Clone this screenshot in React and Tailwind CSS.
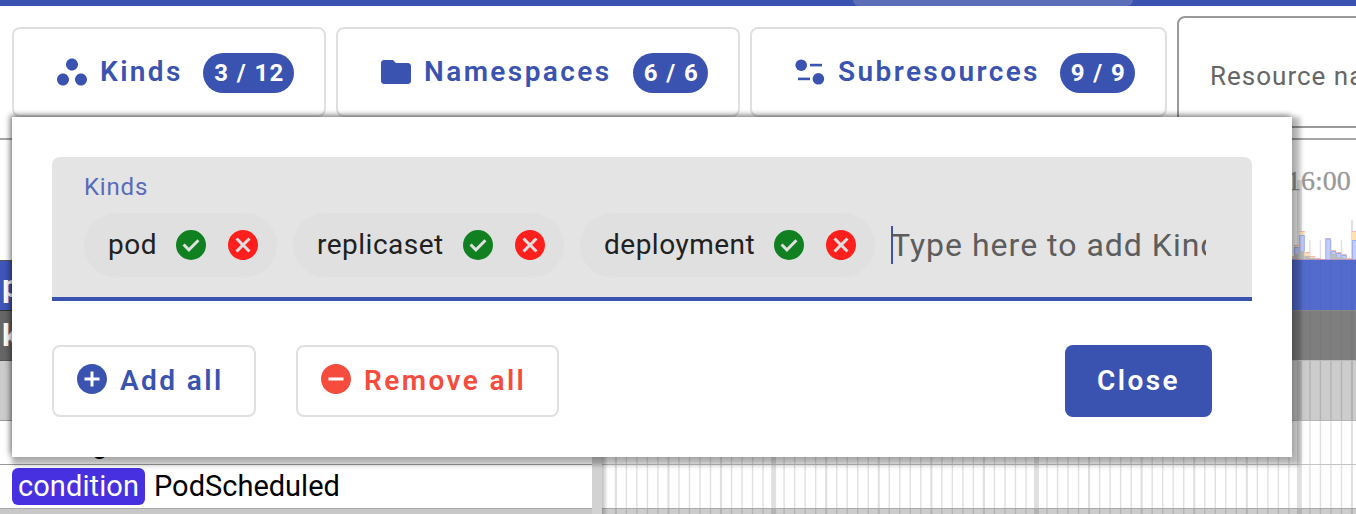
import React from 'react';
import { MdWorkspaces, MdFolder, MdCancel, MdAddCircle, MdRemoveCircle } from 'react-icons/md';

function SubresourceIcon() {
  return (
    <svg width="36" height="36" viewBox="0 0 36 36" fill="currentColor" className="shrink-0">
      <circle cx="9.2" cy="11.2" r="5.8" />
      <rect x="18" y="9.8" width="12" height="2.6" />
      <rect x="6" y="23.6" width="12" height="2.6" />
      <circle cx="26.4" cy="24.8" r="5.8" />
    </svg>
  );
}

function CheckIcon() {
  return (
    <svg width="36" height="36" viewBox="0 0 24 24" fill="currentColor" className="ml-auto shrink-0 text-[#108020]">
      <path fillRule="evenodd" d="M12 2a10 10 0 1 0 0 20a10 10 0 1 0 0-20ZM10.6 16.6 17.65 9.55 16.25 8.15 10.6 13.8 7.75 10.95 6.35 12.35Z" />
    </svg>
  );
}

function FilterButton({ icon, label, count, width, badge }) {
  return (
    <button className={`flex h-[90px] shrink-0 items-start rounded-lg border-2 border-[#e0e0e0] pl-10 text-[#3a53b0] ${width}`}>
      <span className="mt-[25px] shrink-0">{icon}</span>
      <span className="ml-2.5 mt-[25px] text-[28px] font-semibold leading-[36px] tracking-[2.4px]">{label}</span>
      <span className={`ml-auto mr-[30px] mt-6 flex h-10 items-center justify-center rounded-full bg-[#3a53b0] pl-0.5 text-[24px] font-bold tracking-[1.4px] text-white ${badge}`}>
        {count}
      </span>
    </button>
  );
}

function Chip({ label, width }) {
  return (
    <div className={`flex h-16 shrink-0 items-center rounded-full bg-[#e0e0e0] pl-6 pr-4 ${width}`}>
      <span className="text-[28px] tracking-[0.5px] text-[#212121]">{label}</span>
      <CheckIcon />
      <MdCancel size={36} className="ml-4 shrink-0 text-[#ff1f1c]" />
    </div>
  );
}

const STEP = 10.516;
const ORIGIN = 1299.4;
const ticks = [];
for (let i = -65; i <= 5; i++) {
  const major = i % 25 === 0;
  const medium = i % 5 === 0;
  ticks.push({ x: ORIGIN + i * STEP, w: major ? 5 : medium ? 2.2 : 1.4, top: major ? 42 : medium ? 82 : 102 });
}

const bars = [
  [1288.7, 256, 258, 258], [1294, 245, 247, 254], [1299.3, 231, 235, 251], [1304.6, 252, 256, 256],
  [1309.9, 256, 258, 258], [1315.2, 258, 259, 259], [1320.4, 259, 260, 260], [1325.4, 238, 238.5, 260],
  [1330.7, 250, 251, 254], [1336, 252, 253, 257], [1341.3, 254, 255, 258], [1346.6, 258, 259, 259],
  [1352, 231, 240, 260],
];

function Timeline() {
  return (
    <svg width="754" height="376" viewBox="602 138 754 376" className="block">
      <g fill="#000" fillOpacity="0.12">
        {ticks.map((t, i) => <rect key={i} x={t.x - t.w / 2} y={138 + t.top} width={t.w} height={260 - 138 - t.top} />)}
      </g>
      <text x="1287" y="190" fontSize="28" fill="#999" stroke="#999" strokeWidth="0.3" fontFamily="Liberation Serif, serif">16:00</text>
      {bars.map(([x, top, blue, gray], i) => (
        <g key={i}>
          <rect x={x} y={top} width="5.3" height={blue - top} fill="#ffdfb5" />
          <rect x={x} y={top} width="5.3" height="1" fill="#f5b5b5" />
          <rect x={x} y={blue} width="5.3" height={gray - blue} fill="#c5ccfb" />
          <path d={`M${x + 0.4} ${gray}V${blue + 0.5}H${x + 5}V${gray}`} fill="none" stroke="#8da9e8" strokeWidth="0.8" />
          <rect x={x} y={gray} width="5.3" height={260 - gray} fill="#bcbcb9" />
        </g>
      ))}
      <rect x="602" y="259.3" width="754" height="1" fill="#b58bc0" />
      <rect x="602" y="260" width="754" height="50" fill="#536bcc" />
      <rect x="602" y="310" width="754" height="50" fill="#7e7e7e" />
      <rect x="602" y="360" width="754" height="60" fill="#ccc" />
      <rect x="602" y="508" width="754" height="6" fill="#ccc" />
      <g fill="#000">
        {ticks.map((t, i) => (
          <g key={i}>
            <rect x={t.x - t.w / 2} y="260" width={t.w} height="100" fillOpacity="0.035" />
            <rect x={t.x - t.w / 2} y="360" width={t.w} height="154" fillOpacity="0.12" />
          </g>
        ))}
        <rect x="602" y="310" width="754" height="1" fill="#888" />
        <rect x="602" y="360" width="754" height="1" fill="#bbb" />
        <rect x="602" y="420" width="754" height="1" fill="#b5b5b5" />
        <rect x="602" y="464" width="754" height="1" fill="#c4c4c4" />
        <rect x="602" y="508" width="754" height="1" fill="#aaa" />
      </g>
    </svg>
  );
}

export default function App() {
  return (
    <div className="relative flex h-[514px] w-[1356px] flex-col overflow-hidden bg-white font-['Roboto',sans-serif]">
      <header className="flex h-1.5 shrink-0 bg-[#3a53b0]">
        <div className="ml-[853px] h-1.5 w-[280px] rounded-b-lg bg-[#5d6eb9]" />
      </header>

      <div className="flex h-[132px] shrink-0 items-start gap-2.5 pl-3 pt-[21px]">
        <FilterButton icon={<MdWorkspaces size={36} />} label="Kinds" count="3 / 12" width="w-[314px]" badge="w-[91px]" />
        <FilterButton icon={<MdFolder size={36} />} label="Namespaces" count="6 / 6" width="w-[404px]" badge="w-[75px]" />
        <FilterButton icon={<SubresourceIcon />} label="Subresources" count="9 / 9" width="w-[417px]" badge="w-[75px]" />
        <div className="-mt-[11px] h-[112px] w-[400px] shrink-0 rounded-lg border-2 border-[#9a9a9a] pl-[31px] pt-[42px] text-[26px] leading-[32px] tracking-[1px] text-[#666]">
          Resource name
        </div>
      </div>

      <main className="flex flex-1 border-t-2 border-[#a6a6a6]">
        <section className="flex w-[592px] shrink-0 flex-col">
          <div className="h-[120px] shrink-0" />
          <div className="h-[50px] shrink-0 border-t border-[#555] bg-[#3f55b8] pl-0.5 text-[32px] font-bold leading-[50px] text-white">p</div>
          <div className="h-[50px] shrink-0 border-t border-[#333] bg-[#666] pl-0.5 text-[32px] font-bold leading-[48px] text-white">k</div>
          <div className="h-[60px] shrink-0 border-t border-[#555] bg-[#ccc]" />
          <div className="h-11 shrink-0 border-t border-[#999] pl-[92px] text-[28px] leading-[46px] text-black">g</div>
          <div className="flex h-11 shrink-0 items-center gap-[9px] border-t border-[#999] pl-3">
            <span className="flex h-[37px] w-[133px] items-center justify-center rounded-md bg-[#4630e0] text-[29px] tracking-[0.1px] text-white">condition</span>
            <span className="text-[29px] text-black">PodScheduled</span>
          </div>
          <div className="h-1.5 shrink-0 border-t border-[#aaa] bg-[#c8c8c8]" />
        </section>
        <div className="w-2.5 shrink-0 bg-[#d2d2d2]" />
        <section className="relative -mt-0.5 h-[376px] shrink-0">
          <Timeline />
          <div className="absolute left-0 top-0 h-full w-1.5 bg-linear-to-r from-black/25 to-transparent" />
        </section>
      </main>

      <div className="absolute left-3 top-[117px] flex h-[340px] w-[1280px] flex-col bg-white p-10 shadow-[-2px_-2px_6px_rgba(0,0,0,0.4),4px_4px_5px_4px_rgba(0,0,0,0.28)]">
        <div className="h-36 shrink-0 rounded-t-lg border-b-4 border-[#3a53b0] bg-[#e4e4e4] pl-8 pr-[46px] pt-4">
          <div className="h-10 text-[24px] leading-[28px] tracking-[0.8px] text-[#596bbb]">Kinds</div>
          <div className="flex items-center gap-4">
            <Chip label="pod" width="w-[193px]" />
            <Chip label="replicaset" width="w-[271px]" />
            <Chip label="deployment" width="w-[295px]" />
            <div className="flex min-w-0 flex-1 items-center overflow-hidden">
              <span className="h-[38px] w-0.5 shrink-0 bg-[#3a53b0]" />
              <span className="-ml-0.5 whitespace-nowrap text-[32px] tracking-[1px] text-[#5d5d5d]">Type here to add Kinds</span>
            </div>
          </div>
        </div>
        <div className="mt-11 flex h-[72px] shrink-0 items-stretch pr-10 text-[28px] font-semibold tracking-[2.4px]">
          <button className="flex w-[204px] items-center rounded-lg border-2 border-[#e0e0e0] pl-5 text-[#3a53b0]">
            <MdAddCircle size={36} className="-mt-1 mr-2.5" />
            Add all
          </button>
          <button className="ml-10 flex w-[263px] items-center rounded-lg border-2 border-[#e0e0e0] pl-5 text-[#f54c3e]">
            <MdRemoveCircle size={36} className="-mt-1 mr-2.5" />
            Remove all
          </button>
          <button className="ml-auto w-[147px] rounded-lg bg-[#3a53b0] text-white">Close</button>
        </div>
      </div>
    </div>
  );
}
